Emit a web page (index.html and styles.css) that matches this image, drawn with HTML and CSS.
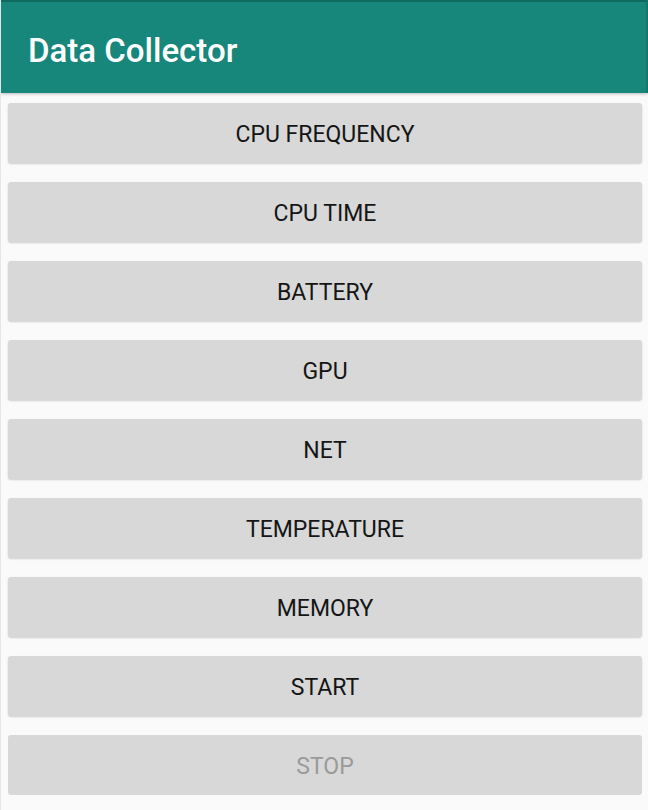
FILE: index.html
```html
<!DOCTYPE html>
<html>
<head>
<meta charset="utf-8">
<link rel="stylesheet" href="styles.css">
</head>
<body>
<div class="app">
  <header class="toolbar">
    <h1 class="title">Data Collector</h1>
  </header>
  <main class="list">
    <button class="btn">CPU FREQUENCY</button>
    <button class="btn">CPU TIME</button>
    <button class="btn">BATTERY</button>
    <button class="btn">GPU</button>
    <button class="btn">NET</button>
    <button class="btn">TEMPERATURE</button>
    <button class="btn">MEMORY</button>
    <button class="btn">START</button>
    <button class="btn disabled">STOP</button>
  </main>
</div>
</body>
</html>
```
FILE: styles.css
```css
html, body {
  margin: 0;
  padding: 0;
  background: #fafafa;
}
.app {
  width: 648px;
  height: 810px;
  overflow: hidden;
  box-sizing: border-box;
  border-left: 1px solid #e6e6e6;
  font-family: Roboto, "Noto Sans", sans-serif;
}
.toolbar {
  height: 93px;
  box-sizing: border-box;
  background: #16877a;
  border-top: 2px solid #0f6a5f;
  border-right: 2px solid #12786c;
  display: flex;
  align-items: center;
  padding: 0 0 0 27px;
  box-shadow: 0 1px 3px rgba(0,0,0,0.25);
}
.title {
  margin: 0;
  color: #ffffff;
  font-size: 33px;
  font-weight: 500;
  padding-top: 5px;
}
.list {
  display: flex;
  flex-direction: column;
  gap: 19px;
  padding: 10px 6px 0 7px;
}
.btn {
  height: 60px;
  border: none;
  border-radius: 3px;
  background: #d7d8d7;
  box-shadow: 0 1px 2px rgba(0,0,0,0.18);
  font-family: Roboto, "Noto Sans", sans-serif;
  font-size: 23px;
  font-weight: 400;
  color: #151515;
  letter-spacing: 0;
  padding: 3px 0 0 0;
}
.btn.disabled {
  color: #9a9a9a;
  box-shadow: none;
}
```
